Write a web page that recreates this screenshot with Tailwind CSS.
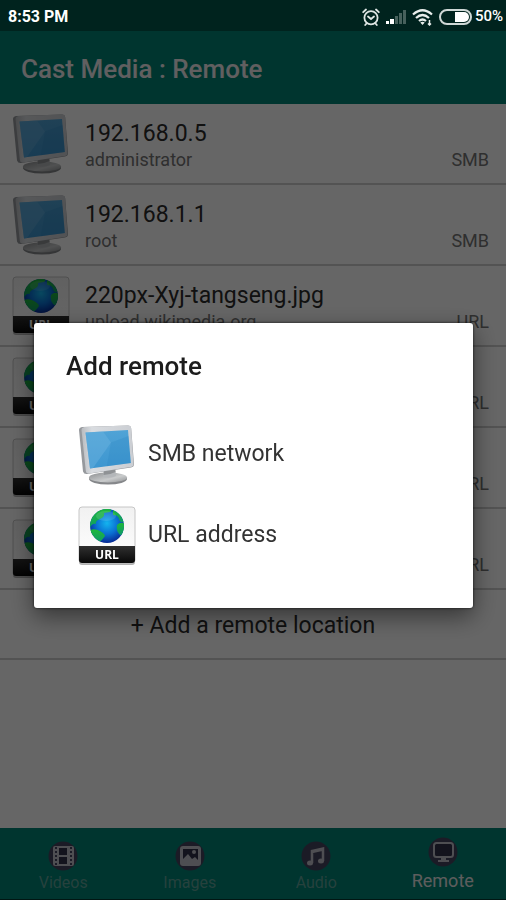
<!DOCTYPE html>
<html lang="en">
<head>
    <meta charset="UTF-8">
    <meta name="viewport" content="width=device-width, initial-scale=1.0">
    <title>Cast Media : Remote</title>
    <script src="https://cdn.jsdelivr.net/npm/@tailwindcss/browser@4"></script>
</head>
<body class="bg-white font-[Roboto,'Noto_Sans',sans-serif] text-gray-900">

    <!-- shared icons -->
    <svg class="absolute h-0 w-0" aria-hidden="true">
        <defs>
            <linearGradient id="screen" x1="0" y1="0" x2="0" y2="1">
                <stop offset="0" stop-color="#50a3d6"/>
                <stop offset="1" stop-color="#3d96d0"/>
            </linearGradient>
            <linearGradient id="frame" x1="0" y1="0" x2="1" y2="0">
                <stop offset="0" stop-color="#b9bcc0"/>
                <stop offset="0.2" stop-color="#d9dce0"/>
                <stop offset="1" stop-color="#cbced3"/>
            </linearGradient>
            <linearGradient id="base" x1="0" y1="0" x2="1" y2="1">
                <stop offset="0" stop-color="#8c8e90"/>
                <stop offset="0.6" stop-color="#c9cbcc"/>
                <stop offset="1" stop-color="#909294"/>
            </linearGradient>
            <linearGradient id="tile" x1="0" y1="0" x2="0" y2="1">
                <stop offset="0" stop-color="#f1f1f1"/>
                <stop offset="1" stop-color="#ffffff"/>
            </linearGradient>
            <linearGradient id="band" x1="0" y1="0" x2="0" y2="1">
                <stop offset="0" stop-color="#303030"/>
                <stop offset="1" stop-color="#080808"/>
            </linearGradient>
            <radialGradient id="sea" cx="0.5" cy="0.42" r="0.58">
                <stop offset="0" stop-color="#14b4ee"/>
                <stop offset="0.55" stop-color="#0a6fd2"/>
                <stop offset="1" stop-color="#062a94"/>
            </radialGradient>
            <linearGradient id="land" x1="0" y1="0" x2="0" y2="1">
                <stop offset="0" stop-color="#1fb83a"/>
                <stop offset="1" stop-color="#0d9a6a"/>
            </linearGradient>
            <clipPath id="globe"><circle cx="29" cy="20" r="17"/></clipPath>
        </defs>
        <symbol id="icon-smb" viewBox="0 0 58 62">
            <ellipse cx="30" cy="55" rx="19" ry="5.500" fill="#85878a"/>
            <ellipse cx="30" cy="53.500" rx="19" ry="5" fill="url(#base)"/>
            <path d="M26 43h11l1 9q-6 3-13 1z" fill="#b4b7ba"/>
            <path d="M26 46l11-2 .5 4q-6 3-12 3z" fill="#8f9295"/>
            <path d="M1 6q0-2.500 3-3L50 1.500q3 0 3.200 3L56 40q0 3-3 3.500L9 50q-3 .3-4-2.500z" fill="#96999d"/>
            <path d="M3.500 6q0-2.500 3-3L50 1.500q3 0 3.200 3L55.500 40q0 2.500-3 3L11 49.500q-3 .3-3.200-2.500z" fill="url(#frame)"/>
            <path d="M7.500 8.500L50 6l2.800 33L12 44.500z" fill="url(#screen)"/>
            <path d="M7.500 8.500L25 7.500l8 11-18 25.500-3 .5z" fill="#6db4e0" opacity=".45"/>
            <path d="M33 18.500L50.500 12l2.300 27-24 3.200z" fill="#2f87c4" opacity=".3"/>
        </symbol>
        <symbol id="icon-url" viewBox="0 0 58 60">
            <rect x="1" y="2" width="56" height="57" rx="3" fill="#000" opacity=".3"/>
            <rect x="1" y="1" width="56" height="56" rx="3" fill="url(#tile)" stroke="#c6c6c6"/>
            <path d="M1 40h56v14q0 3-3 3H4q-3 0-3-3z" fill="url(#band)"/>
            <circle cx="29" cy="20" r="17" fill="url(#sea)"/>
            <g clip-path="url(#globe)" fill="url(#land)">
                <path d="M10 17q2-11 13-14l8-1q4 2 1 4l-6 1q1 4-4 6t-4 5q-4-1-6 4l-3 3z"/>
                <path d="M35 4l7 4q5 5 4 8-4 1-5-3t-6-4z"/>
                <path d="M12 24q5-2 10 1t5 5q-3 5-7 7l-6-3z"/>
                <path d="M39 19q4-4 8-1l-1 9q-2 4-5 1t-2-9z"/>
            </g>
            <ellipse cx="28" cy="10" rx="10" ry="5" fill="#fff" opacity=".12"/>
            <text x="29" y="53" text-anchor="middle" font-family="Open Sans, sans-serif" font-size="12" font-weight="700" fill="#fff">URL</text>
        </symbol>
    </svg>

    <div class="flex min-h-screen flex-col">
        <!-- status bar stays above the dimmed page -->
        <div class="relative z-20 flex h-[31px] items-center justify-between bg-[#00231e] pl-2 pr-[3px] pt-0.5 text-white">
            <span class="text-base font-bold">8:53 PM</span>
            <div class="flex items-center gap-[6px]">
                <svg class="h-[18px] w-[18px]" viewBox="0 0 18 18" fill="none" stroke="#dfe6e4" stroke-width="1.800" stroke-linecap="round">
                    <circle cx="9" cy="9.800" r="6.600"/>
                    <path d="M1.200 4.200L4 1.500M16.800 4.200L14 1.500M6 8.500l3 2.500 3-2.500M4.500 15.500L3.200 17M13.500 15.500l1.300 1.500"/>
                </svg>
                <svg class="h-[15px] w-5" viewBox="0 0 20 15">
                    <path d="M0 12h3v3H0zM4 10h4v5H4z" fill="#fff"/>
                    <path d="M9 7h3v8H9zM13 4h3v11h-3zM17 1h3v14h-3z" fill="#47615c"/>
                </svg>
                <svg class="h-[18px] w-[21px]" viewBox="0 0 21 18" fill="none" stroke="#e8eeec" stroke-width="2.200">
                    <path d="M1 6.500Q10.500-2 20 6.500M4 10q6.500-6 13 0M7 13q3.500-3 7 0"/>
                    <path d="M8.300 14.500L10.500 17l2.200-2.500q-2.200-1.500-4.400 0z" fill="#e8eeec" stroke="none"/>
                    <path d="M17.500 12v5M16 15.500l1.500 1.500 1.500-1.500" stroke-width="1.500"/>
                </svg>
                <div class="flex items-center gap-[3px]">
                    <svg class="h-4 w-[33px]" viewBox="0 0 33 16">
                        <rect x="1" y="1" width="31" height="14" rx="7" fill="none" stroke="#cfd8d6" stroke-width="2"/>
                        <path d="M16 3h9a5 5 0 0 1 0 10h-9z" fill="#fff"/>
                    </svg>
                    <span class="text-[15px] font-medium">50%</span>
                </div>
            </div>
        </div>

        <header class="flex h-[73px] items-center bg-[#008577] px-[21px] pt-1">
            <h1 class="text-[26px] font-medium text-[#f2eef0]">Cast Media : Remote</h1>
        </header>

        <main class="flex-1">
            <ul id="remote-list"></ul>
            <button class="h-[70px] w-full border-b-2 border-[#cfcfcf] pt-1 text-center text-[23px] text-[#2b2b2b]">+ Add a remote location</button>
        </main>

        <nav class="grid h-[72px] grid-cols-4 border-b border-[#003830] bg-[#008577] text-base text-[#5fa39a]">
            <a href="#videos" class="flex flex-col items-center justify-end pb-1">
                <svg class="h-[30px] w-[30px]" viewBox="0 0 30 30">
                    <circle cx="15" cy="15" r="14.500" fill="#45455f"/>
                    <rect x="5" y="5" width="21" height="20" rx="2" fill="#c4c4cc"/>
                    <path d="M11 7h8v7h-8zM11 16h8v7h-8z" fill="#30304a"/>
                    <path d="M8 6v18M23 6v18" stroke="#45455f" stroke-width="2" stroke-dasharray="2 2"/>
                </svg>
                <span>Videos</span>
            </a>
            <a href="#images" class="flex flex-col items-center justify-end pb-1">
                <svg class="h-[30px] w-[30px]" viewBox="0 0 30 30">
                    <circle cx="15" cy="15" r="14.500" fill="#45455f"/>
                    <rect x="5" y="5" width="21" height="20" rx="3" fill="#c4c4cc"/>
                    <path d="M8 8h15v11l-3-3-3 2-4-5-5 5z" fill="#30304a"/>
                    <circle cx="19" cy="11" r="2" fill="#c4c4cc"/>
                </svg>
                <span>Images</span>
            </a>
            <a href="#audio" class="flex flex-col items-center justify-end pb-1">
                <svg class="h-[30px] w-[30px]" viewBox="0 0 30 30">
                    <circle cx="15" cy="15" r="14.500" fill="#45455f"/>
                    <path d="M11 22V10l11-2.500V20M11 11l11-2.500" fill="none" stroke="#c4c4cc" stroke-width="2.500"/>
                    <ellipse cx="9" cy="22" rx="3" ry="2.500" fill="#c4c4cc"/>
                    <ellipse cx="20" cy="20" rx="3" ry="2.500" fill="#c4c4cc"/>
                </svg>
                <span>Audio</span>
            </a>
            <a href="#remote" class="flex flex-col items-center justify-end pb-1 text-lg text-[#e8e8e8]">
                <svg class="h-[30px] w-[30px]" viewBox="0 0 30 30">
                    <circle cx="15" cy="15" r="14.500" fill="#45455f"/>
                    <rect x="6" y="6" width="19" height="14" rx="2.500" fill="#30304a" stroke="#c4c4cc" stroke-width="2"/>
                    <path d="M13 20h5v3h3v2H10v-2h3z" fill="#c4c4cc"/>
                </svg>
                <span>Remote</span>
            </a>
        </nav>
    </div>

    <!-- "Add remote" dialog -->
    <div class="fixed inset-0 z-10 flex items-center bg-black/60 pl-[34px] pr-[33px] pt-[31px]">
        <div role="dialog" aria-modal="true" aria-labelledby="dialog-title" class="w-full rounded-[3px] bg-white pb-8 shadow-[0_8px_24px_rgba(0,0,0,0.5),0_0_3px_rgba(0,0,0,0.8)]">
            <h2 id="dialog-title" class="px-8 pb-7 pt-6 text-[26px] leading-[39px] font-medium text-[#1c1c1c]">Add remote</h2>
            <button class="flex h-[81px] w-full items-center gap-3 pl-11 text-left text-[23px] text-[#333]">
                <svg class="h-[62px] w-[58px]"><use href="#icon-smb"/></svg>
                SMB network
            </button>
            <button class="flex h-[81px] w-full items-center gap-3 pl-11 text-left text-[23px] text-[#333]">
                <svg class="h-[60px] w-[58px]"><use href="#icon-url"/></svg>
                URL address
            </button>
        </div>
    </div>

    <script>
        const remotes = [
            { title: '192.168.0.5', detail: 'administrator', type: 'SMB' },
            { title: '192.168.1.1', detail: 'root', type: 'SMB' },
            { title: '220px-Xyj-tangseng.jpg', detail: 'upload.wikimedia.org', type: 'URL' },
            { title: '', detail: '', type: 'URL' },
            { title: '', detail: '', type: 'URL' },
            { title: '', detail: '', type: 'URL' },
        ];

        document.getElementById('remote-list').innerHTML = remotes.map(remote => `
            <li class="flex h-[81px] items-center gap-[15px] border-b-2 border-[#cfcfcf] pl-3 pr-[17px]">
                <svg class="h-[62px] w-[58px] shrink-0"><use href="#icon-${remote.type.toLowerCase()}"/></svg>
                <div class="min-w-0 flex-1 pt-1">
                    <p class="h-7 text-[23px] leading-7 text-[#2b2b2b]">${remote.title}</p>
                    <div class="flex h-6 justify-between text-lg leading-6 text-[#757575]">
                        <span>${remote.detail}</span>
                        <span>${remote.type}</span>
                    </div>
                </div>
            </li>
        `).join('');
    </script>

</body>
</html>
